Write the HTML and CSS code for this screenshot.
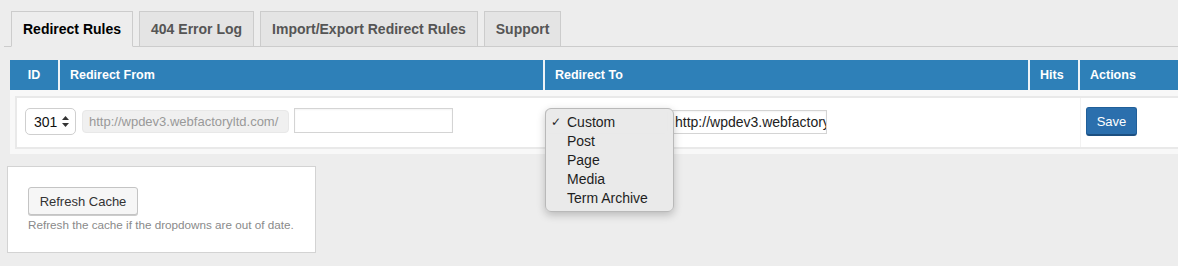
FILE: index.html
```html
<!DOCTYPE html>
<html lang="en">

<head>
    <meta charset="utf-8">
    <title>Redirect Rules</title>
    <link rel="stylesheet" href="styles.css">
</head>

<body>
    <nav class="tabs">
        <a class="tab valgt">Redirect Rules</a>
        <a class="tab">404 Error Log</a>
        <a class="tab">Import/Export Redirect Rules</a>
        <a class="tab">Support</a>
    </nav>

    <section class="regler">
        <div class="hoved">
            <div class="kol kol-id">ID</div>
            <div class="kol kol-fra">Redirect From</div>
            <div class="kol kol-til">Redirect To</div>
            <div class="kol kol-hits">Hits</div>
            <div class="kol kol-handling">Actions</div>
        </div>
        <div class="krop">
            <div class="regel">
                <div class="celle celle-fra">
                    <span class="vaelger">301
                        <svg width="7" height="11" viewBox="0 0 7 11"><path d="M3.5 0 L7 4 L0 4 Z M0 7 L7 7 L3.5 11 Z" fill="#333"/></svg>
                    </span>
                    <span class="laast">http://wpdev3.webfactoryltd.com/</span>
                    <input class="felt felt-fra" type="text" value="">
                </div>
                <div class="celle celle-til">
                    <span class="type">
                        <span class="type-boks"></span>
                        <ul class="menu">
                            <li class="valgt"><span class="flueben">✓</span>Custom</li>
                            <li>Post</li>
                            <li>Page</li>
                            <li>Media</li>
                            <li>Term Archive</li>
                        </ul>
                    </span>
                    <input class="felt felt-til" type="text" value="http://wpdev3.webfactoryltd.com/">
                </div>
                <div class="celle celle-hits"></div>
                <div class="celle celle-handling">
                    <button class="gem">Save</button>
                </div>
            </div>
        </div>
    </section>

    <section class="cache">
        <button class="opdater">Refresh Cache</button>
        <p>Refresh the cache if the dropdowns are out of date.</p>
    </section>
</body>

</html>
```

FILE: styles.css
```css
body {
    margin: 0;
    font-family: "Liberation Sans", Arial, sans-serif;
    background: #ededed;
    color: #333;
}

/* faner */
.tabs {
    display: flex;
    align-items: flex-end;
    margin-left: 4px;
    padding: 11px 0 0 7px;
    border-bottom: 1px solid #ccc;
}

.tab {
    line-height: 34px;
    padding: 0 11px;
    margin-right: 6px;
    border: 1px solid #ccc;
    border-bottom: none;
    background: #e4e4e4;
    font-size: 14px;
    font-weight: bold;
    color: #555;
}

.tab.valgt {
    background: #ededed;
    color: #000;
    border-bottom: 1px solid #ededed;
    margin-bottom: -1px;
}

/* tabel */
.regler {
    margin: 13px 0 0 10px;
}

.hoved {
    display: flex;
    height: 30px;
    background: #2e80b8;
    color: #fff;
    font-size: 12.5px;
    font-weight: bold;
    line-height: 30px;
}

.kol {
    padding-left: 10px;
    border-right: 2px solid #eef3f7;
    box-sizing: border-box;
}

.kol-id {
    width: 50px;
    padding: 0;
    text-align: center;
}

.kol-fra,
.kol-til {
    width: 485px;
}

.kol-hits {
    width: 50px;
}

.kol-handling {
    flex: 1;
    border-right: none;
}

.krop {
    background: #f8f8f8;
    padding: 6px 0 5px 5px;
}

.regel {
    display: flex;
    align-items: center;
    background: #fff;
    border: 2px solid #e9e9e9;
    border-right: none;
    padding: 9px 0 11px;
}

.celle {
    display: flex;
    align-items: center;
    box-sizing: border-box;
}

.celle-fra {
    width: 528px;
    padding-left: 8px;
}

.celle-til {
    width: 485px;
}

.celle-hits {
    width: 50px;
    align-self: stretch;
}

.celle-handling {
    border-left: 1px solid #f2f2f2;
    padding-left: 5px;
    margin: -9px 0 -11px;
    padding-top: 9px;
    padding-bottom: 11px;
}

.vaelger {
    display: flex;
    align-items: center;
    justify-content: space-between;
    width: 51px;
    height: 27px;
    box-sizing: border-box;
    padding: 0 6px 0 8px;
    border: 1px solid #cfcfcf;
    border-radius: 5px;
    font-size: 14px;
    color: #111;
}

.laast {
    margin-left: 6px;
    width: 207px;
    height: 23px;
    box-sizing: border-box;
    padding-left: 6px;
    line-height: 22px;
    background: #f0f0f0;
    border: 1px solid #e8e8e8;
    border-radius: 4px;
    font-size: 13px;
    color: #999;
}

.felt {
    height: 25px;
    box-sizing: border-box;
    margin: 0;
    border: 1px solid #d4d4d4;
    border-radius: 0;
    box-shadow: inset 0 1px 2px rgba(0, 0, 0, 0.05);
    background: #fff;
    font-family: "Liberation Sans", Arial, sans-serif;
}

.felt-fra {
    width: 159px;
    margin-left: 5px;
    margin-top: -2px;
}

.felt-til {
    width: 157px;
    height: 24px;
    margin-left: 2px;
    padding: 0 0 0 4px;
    font-size: 14px;
    color: #222;
}

/* dropdown */
.type {
    position: relative;
}

.type-boks {
    display: block;
    width: 123px;
    height: 25px;
    border: 1px solid #ccc;
    border-radius: 4px;
    box-sizing: border-box;
}

.menu {
    position: absolute;
    top: -1px;
    left: 0;
    z-index: 2;
    width: 129px;
    height: 104px;
    box-sizing: border-box;
    margin: 0;
    padding: 4px 0 0;
    list-style: none;
    background: rgba(234, 234, 234, 0.98);
    border: 1px solid #b9b9b9;
    border-radius: 6px;
    box-shadow: 0 3px 8px rgba(0, 0, 0, 0.22);
    font-size: 14px;
    color: #1e1e1e;
}

.menu li {
    position: relative;
    line-height: 19px;
    padding-left: 21px;
}

.flueben {
    position: absolute;
    left: 5px;
    font-family: "DejaVu Sans", sans-serif;
    font-size: 12px;
}

.gem {
    width: 51px;
    height: 29px;
    font-family: "Liberation Sans", Arial, sans-serif;
    font-size: 13px;
    color: #fff;
    background: #2b6fad;
    border: 1px solid #215f99;
    border-bottom: 2px solid #1c4f80;
    border-radius: 3px;
    padding: 0;
}

/* cache boks */
.cache {
    width: 309px;
    box-sizing: border-box;
    margin: 12px 0 0 7px;
    padding: 20px 20px 19px;
    background: #fff;
    border: 1px solid #d3d3d3;
}

.opdater {
    width: 110px;
    height: 28px;
    padding: 0;
    font-family: "Liberation Sans", Arial, sans-serif;
    font-size: 13px;
    color: #333;
    background: #f6f6f6;
    border: 1px solid #c4c4c4;
    border-radius: 3px;
    box-shadow: 0 1px 0 #ccc;
}

.cache p {
    margin: 2px 0 0;
    font-size: 11.7px;
    line-height: 16px;
    color: #8a8a8a;
}
```
